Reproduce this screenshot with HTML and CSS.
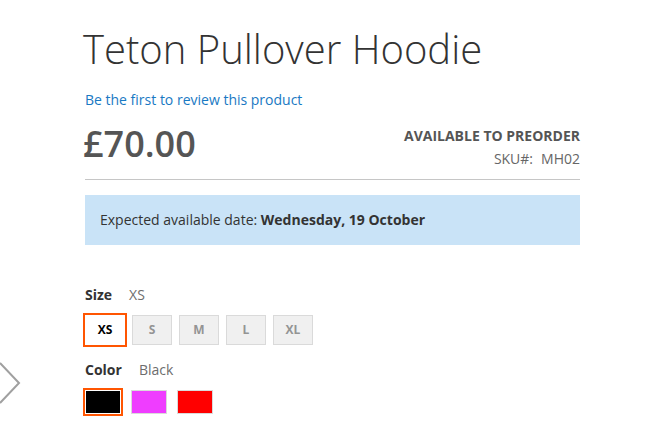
FILE: index.html
```html
<!DOCTYPE html>
<html lang="en">
<head>
<meta charset="utf-8">
<title>Teton Pullover Hoodie</title>
<link rel="stylesheet" href="styles.css">
</head>
<body>
<div class="page">
  <svg class="gallery-next" width="22" height="42" viewBox="0 0 22 42" aria-hidden="true">
    <polyline points="0,1 19,21 0,41" fill="none" stroke="#a0a0a0" stroke-width="2"/>
  </svg>
  <main class="info">
    <h1 class="title">Teton Pullover Hoodie</h1>
    <a class="review" href="#">Be the first to review this product</a>
    <div class="price-row">
      <span class="price">£70.00</span>
      <div class="stock">
        <div class="avail">Available to preorder</div>
        <div class="sku"><span class="sku-label">SKU#:</span><span class="sku-value">MH02</span></div>
      </div>
    </div>
    <div class="notice">Expected available date: <strong>Wednesday, 19 October</strong></div>
    <div class="attr attr-size">
      <div class="attr-label"><span class="attr-name">Size</span><span class="attr-value">XS</span></div>
      <div class="swatches">
        <span class="swatch-text selected">XS</span>
        <span class="swatch-text">S</span>
        <span class="swatch-text">M</span>
        <span class="swatch-text">L</span>
        <span class="swatch-text">XL</span>
      </div>
    </div>
    <div class="attr attr-color">
      <div class="attr-label"><span class="attr-name">Color</span><span class="attr-value">Black</span></div>
      <div class="swatches colors">
        <span class="swatch-color selected black"></span>
        <span class="swatch-color magenta"></span>
        <span class="swatch-color red"></span>
      </div>
    </div>
  </main>
</div>
</body>
</html>
```

FILE: styles.css
```css
html, body {
  margin: 0;
  padding: 0;
  background: #fff;
}
body {
  font-family: "Open Sans", "Liberation Sans", sans-serif;
  color: #333;
  font-size: 14px;
  line-height: 20px;
}
.page {
  position: relative;
  width: 646px;
  height: 443px;
  overflow: hidden;
}
.gallery-next {
  position: absolute;
  left: 0;
  top: 362px;
}
.info {
  width: 495px;
  margin-left: 85px;
  padding-top: 27px;
  display: flex;
  flex-direction: column;
}
.title {
  margin: 0;
  font-size: 40px;
  line-height: 44px;
  font-weight: 300;
  color: #333;
  margin-left: -2px;
}
.review {
  margin-top: 19px;
  color: #1979c3;
  text-decoration: none;
  font-size: 14px;
  line-height: 20px;
}
.price-row {
  margin-top: 14px;
  display: flex;
  justify-content: space-between;
  align-items: flex-start;
  padding-bottom: 10px;
  border-bottom: 1px solid #c6c6c6;
}
.price {
  font-size: 36px;
  line-height: 40px;
  font-weight: 600;
  color: #555;
  margin-left: -2px;
}
.stock {
  margin-top: 2px;
  display: flex;
  flex-direction: column;
  align-items: flex-end;
  gap: 3px;
}
.avail {
  text-transform: uppercase;
  font-weight: 700;
  color: #555;
  font-size: 14px;
}
.sku {
  color: #666;
  display: flex;
  gap: 8px;
}
.notice {
  margin-top: 15px;
  background: #c9e3f7;
  padding: 15px;
  color: #333;
}
.notice strong {
  font-weight: 700;
}
.attr-size {
  margin-top: 40px;
}
.attr-color {
  margin-top: 15px;
}
.attr-label {
  display: flex;
  gap: 17px;
}
.attr-name {
  font-weight: 700;
}
.attr-value {
  color: #6d6d6d;
}
.swatches {
  margin-top: 10px;
  display: flex;
  gap: 7px;
}
.swatches.colors {
  gap: 10px;
}
.swatch-text {
  box-sizing: border-box;
  width: 40px;
  height: 30px;
  border: 1px solid #dadada;
  background: #f0f0f0;
  color: #949494;
  font-size: 12px;
  font-weight: 700;
  display: flex;
  align-items: center;
  justify-content: center;
}
.swatch-text.selected {
  background: #fff;
  color: #000;
  border-color: #fff;
  outline: 2px solid #ff5501;
}
.swatch-color {
  box-sizing: border-box;
  width: 36px;
  height: 24px;
  border: 1px solid #dadada;
}
.swatch-color.selected {
  border-color: #fff;
  outline: 2px solid #ff5501;
}
.black { background: #000; }
.magenta { background: #ef3dff; }
.red { background: #ff0000; }
```
